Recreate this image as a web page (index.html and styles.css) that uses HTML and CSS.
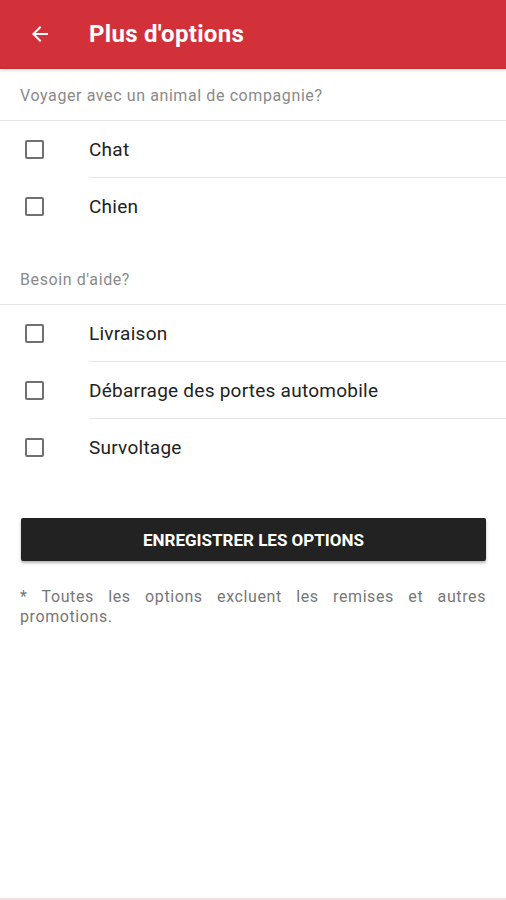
FILE: index.html
```html
<!DOCTYPE html>
<html lang="fr">
<head>
<meta charset="utf-8">
<title>Plus d'options</title>
<link rel="stylesheet" href="styles.css">
</head>
<body>
<header class="appbar">
  <span class="back">
    <svg width="24" height="24" viewBox="0 0 24 24"><path d="M20 11H7.83l5.59-5.59L12 4l-8 8 8 8 1.41-1.41L7.83 13H20v-2z" fill="#fff"/></svg>
  </span>
  <h1 class="title">Plus d'options</h1>
</header>
<main class="content">
  <section class="group">
    <div class="group-title">Voyager avec un animal de compagnie?</div>
    <ul class="list">
      <li class="row"><span class="box"></span><span class="label">Chat</span></li>
      <li class="row"><span class="box"></span><span class="label">Chien</span></li>
    </ul>
  </section>
  <section class="group">
    <div class="group-title">Besoin d'aide?</div>
    <ul class="list">
      <li class="row"><span class="box"></span><span class="label">Livraison</span></li>
      <li class="row"><span class="box"></span><span class="label">Débarrage des portes automobile</span></li>
      <li class="row"><span class="box"></span><span class="label">Survoltage</span></li>
    </ul>
  </section>
  <div class="actions">
    <button class="save">ENREGISTRER LES OPTIONS</button>
    <p class="note">* Toutes les options excluent les remises et autres promotions.</p>
  </div>
</main>
<div class="bottom-line"></div>
</body>
</html>
```
FILE: styles.css
```css
* { box-sizing: border-box; }
html, body { margin: 0; padding: 0; }
body {
  width: 506px;
  height: 900px;
  background: #fff;
  font-family: Roboto, "Noto Sans", sans-serif;
  position: relative;
  overflow: hidden;
}
.appbar {
  height: 68px;
  background: #d3313a;
  display: flex;
  align-items: center;
  box-shadow: 0 1px 0 #c42a32, 0 2px 4px rgba(0,0,0,0.15);
  position: relative;
  z-index: 1;
}
.back {
  width: 24px;
  height: 24px;
  margin-left: 28px;
  display: flex;
}
.title {
  margin: 0 0 0 37px;
  color: #fff;
  font-size: 24px;
  font-weight: 700;
  letter-spacing: 0.3px;
}
.group-title {
  height: 53px;
  padding: 18px 20px 0;
  font-size: 16px;
  color: #8a8a8a;
  line-height: 20px;
  letter-spacing: 0.6px;
  border-bottom: 1px solid #e4e4e4;
}
.list {
  list-style: none;
  margin: 0;
  padding: 0 0 18px;
}
.row {
  height: 56px;
  display: flex;
  align-items: center;
}
.row + .row { height: 57px; border-top: 1px solid #e4e4e4; margin-left: 89px; }
.row + .row .box { margin-left: -64px; }
.box {
  width: 19px;
  height: 19px;
  border: 2px solid #707070;
  border-radius: 2px;
  margin-left: 25px;
  flex: none;
}
.label {
  margin-left: 45px;
  font-size: 19px;
  letter-spacing: 0.25px;
  color: #222;
}
.actions {
  padding: 25px 20px 0 21px;
}
.save {
  display: block;
  width: 100%;
  height: 43px;
  border: none;
  border-radius: 2px;
  background: #222;
  color: #fff;
  font-family: Roboto, sans-serif;
  font-weight: 700;
  font-size: 17px;
  box-shadow: 0 2px 3px rgba(0,0,0,0.3);
}
.note {
  margin: 26px 0 0 -1px;
  font-size: 16px;
  line-height: 20px;
  color: #777;
  text-align: justify;
  letter-spacing: 0.6px;
}
.bottom-line {
  position: absolute;
  left: 0;
  right: 0;
  bottom: 0;
  height: 2px;
  background: #f6dde3;
}
```
